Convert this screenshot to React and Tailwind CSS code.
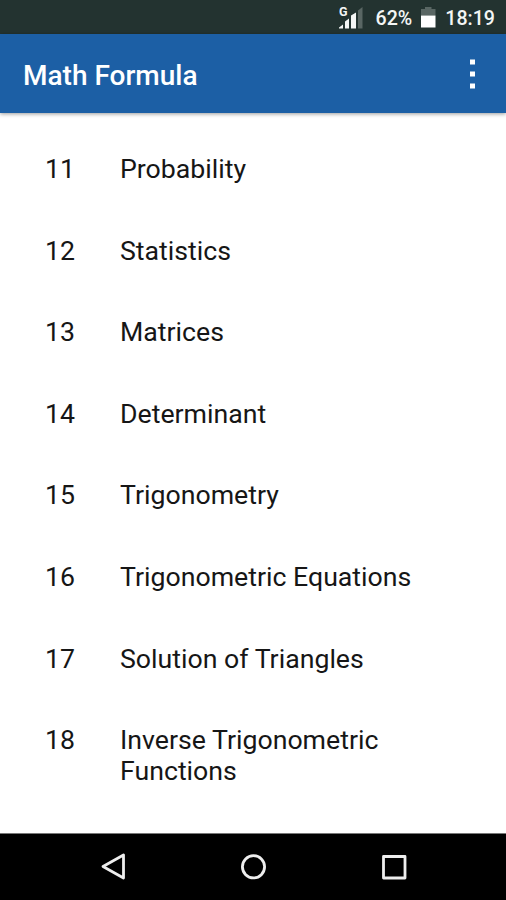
const formulas = [
  { id: 11, title: "Probability" },
  { id: 12, title: "Statistics" },
  { id: 13, title: "Matrices" },
  { id: 14, title: "Determinant" },
  { id: 15, title: "Trigonometry" },
  { id: 16, title: "Trigonometric Equations" },
  { id: 17, title: "Solution of Triangles" },
  { id: 18, title: "Inverse Trigonometric Functions" },
];

export default function App() {
  return (
    <div className="w-[506px] h-[900px] flex flex-col overflow-hidden bg-white font-['Roboto',sans-serif] text-[#161616]">
      {/* Status Bar */}
      <div className="h-[34px] shrink-0 bg-[#233330] flex items-center justify-end pr-[11px] text-[#f4f6f5] text-[19.6px] font-medium">
        {/* Signal */}
        <svg width="25" height="34" viewBox="0 0 25 34" className="mr-[12px]">
          <text x="0" y="15.5" fontSize="12.5" fontWeight="700" fill="#f4f6f5">
            G
          </text>
          <path
            d="M0 28.5v-1l4-3v4zM6 28.5v-7l4-3v10zM12 28.5v-13l5-3v16z"
            fill="#f4f6f5"
          />
          <path d="M19 28.5v-18L23.5 7v21.5z" fill="#596663" />
        </svg>
        <span className="mr-[9px] pt-[3px]">62%</span>
        {/* Battery */}
        <svg width="15" height="34" viewBox="0 0 15 34" className="mr-[9px]">
          <path d="M4 7h6.5v2h4v6.5H0V9h4z" fill="#596663" />
          <path d="M0 15.5h14.5v12H0z" fill="#fff" />
        </svg>
        <span className="pt-[3px]">18:19</span>
      </div>

      {/* App Bar */}
      <div className="h-[79px] shrink-0 bg-[#1c5fa5] flex items-center justify-between pl-[23px] pr-[31px] shadow-[0_1px_4px_rgba(0,0,0,0.4)]">
        <h1 className="text-[28px] font-medium text-white leading-none pt-[4px]">
          Math Formula
        </h1>
        <svg width="5" height="30" viewBox="0 0 5 30" fill="#fff">
          <path d="M0 .5h5v5H0zM0 12.5h5v5H0zM0 24.5h5v5H0z" />
        </svg>
      </div>

      {/* Formula List */}
      <ul className="grow pt-[41px]">
        {formulas.map((formula) => (
          <li
            key={formula.id}
            className="flex min-h-[81.6px] pl-[45px] text-[26.7px] leading-[31px]"
          >
            <span className="w-[75px] shrink-0">{formula.id}</span>
            <span className="w-[310px]">{formula.title}</span>
          </li>
        ))}
      </ul>

      {/* Navigation Bar */}
      <div className="h-[67px] shrink-0 bg-black border-t border-[#777]">
        <svg
          width="506"
          height="66"
          fill="none"
          stroke="#eee"
          strokeWidth="2.8"
          strokeLinejoin="round"
        >
          <path d="M123.5 21v23L103 32.5z" />
          <circle cx="253.5" cy="32.8" r="11.1" />
          <path d="M383.5 22.5H405V44h-21.5z" />
        </svg>
      </div>
    </div>
  );
}
